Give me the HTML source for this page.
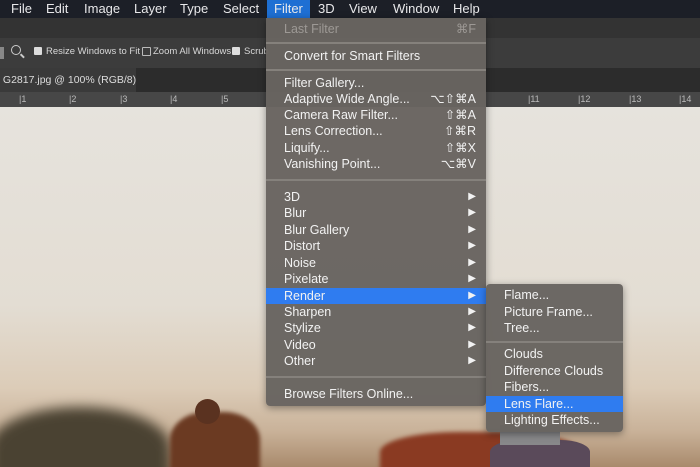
<!DOCTYPE html><html><head><style>
body{margin:0;width:700px;height:467px;overflow:hidden;position:relative;font-family:"Liberation Sans",sans-serif;background:#e2ded6}
.abs{position:absolute}
#mb{left:0;top:0;width:700px;height:18px;background:#1c1f27;color:#e8e8ea;font-size:13px}
#mb span{position:absolute;top:1px}
#photo{left:0;top:107px;width:700px;height:360px;overflow:hidden;background:linear-gradient(#e6e3dd 0%,#e3ddd3 55%,#dcccb8 78%,#c9b299 90%,#a98a6c 100%)}
.menu{background:rgba(104,100,96,.97);border-radius:4px;box-shadow:0 2px 8px rgba(0,0,0,.4);color:#f2f2f2;font-size:12.5px}
.it{position:absolute;left:0;right:0;height:16px;line-height:16px;padding-left:18px}
.sc{position:absolute;right:10px;top:0}
.ar{position:absolute;right:10px;top:0;font-size:10px}
.sep{position:absolute;left:0;right:0;height:2px;background:#85817c}
.hl{background:#2f7cf0}
</style></head><body>
<div class="abs" style="left:0;top:18px;width:700px;height:20px;background:#333"></div>
<div class="abs" style="left:0;top:38px;width:700px;height:30px;background:#3c3c3c;color:#d8d8d8;font-size:9.5px;white-space:nowrap">
<div class="abs" style="left:0;top:9px;width:4px;height:12px;background:#888"></div>
<div class="abs" style="left:11px;top:7px;width:8px;height:8px;border:1.5px solid #ccc;border-radius:50%"></div>
<div class="abs" style="left:20px;top:17px;width:5px;height:1.5px;background:#ccc;transform:rotate(45deg)"></div>
<div class="abs" style="left:34px;top:9px;width:8px;height:8px;background:#ddd;border-radius:1px"></div>
<span class="abs" style="left:46px;top:8px">Resize Windows to Fit</span>
<div class="abs" style="left:142px;top:9px;width:7px;height:7px;border:1px solid #bbb;border-radius:1px"></div>
<span class="abs" style="left:153px;top:8px">Zoom All Windows</span>
<div class="abs" style="left:232px;top:9px;width:8px;height:8px;background:#ddd;border-radius:1px"></div>
<span class="abs" style="left:244px;top:8px">Scrub</span>
</div>
<div class="abs" style="left:0;top:68px;width:700px;height:24px;background:#2c2c2c"></div>
<div class="abs" style="left:0;top:68px;width:136px;height:24px;background:#3a3a3a;color:#ddd;font-size:10.5px;line-height:24px;white-space:nowrap;overflow:hidden">&nbsp;G2817.jpg @ 100% (RGB/8)</div>
<div class="abs" style="left:0;top:92px;width:700px;height:15px;background:#474747;color:#bbb;font-size:9px;border-bottom:1px solid #222">
<span class="abs" style="left:19px;top:2px">|1</span><span class="abs" style="left:69px;top:2px">|2</span><span class="abs" style="left:120px;top:2px">|3</span><span class="abs" style="left:170px;top:2px">|4</span><span class="abs" style="left:221px;top:2px">|5</span>
<span class="abs" style="left:528px;top:2px">|11</span><span class="abs" style="left:578px;top:2px">|12</span><span class="abs" style="left:629px;top:2px">|13</span><span class="abs" style="left:679px;top:2px">|14</span></div>
<div id="photo" class="abs">
<div class="abs" style="left:-10px;top:300px;width:180px;height:80px;background:#4a4232;border-radius:50% 50% 0 0;filter:blur(6px)"></div>
<div class="abs" style="left:170px;top:305px;width:90px;height:70px;background:#6b3a22;border-radius:40% 40% 0 0;filter:blur(2px)"></div>
<div class="abs" style="left:195px;top:292px;width:25px;height:25px;background:#5a3220;border-radius:50%"></div>
<div class="abs" style="left:380px;top:325px;width:200px;height:50px;background:#8a3a22;border-radius:40% 40% 0 0;filter:blur(2px)"></div>
<div class="abs" style="left:490px;top:333px;width:100px;height:40px;background:#5a4a5a;border-radius:30% 30% 0 0"></div>
<div class="abs" style="left:500px;top:318px;width:60px;height:20px;background:#88888a"></div>
</div>
<div id="mb" class="abs">
<span style="left:11px">File</span><span style="left:46px">Edit</span><span style="left:84px">Image</span><span style="left:134px">Layer</span><span style="left:180px">Type</span><span style="left:223px">Select</span>
<div class="abs" style="left:267px;top:0;width:43px;height:18px;background:#1e6fd3"></div>
<span style="left:274px">Filter</span><span style="left:318px">3D</span><span style="left:349px">View</span><span style="left:393px">Window</span><span style="left:453px">Help</span></div>
<div class="abs menu" style="left:266px;top:18px;width:220px;height:388px;border-radius:0 0 4px 4px">
<div class="it" style="top:3px;color:#9d9995">Last Filter<span class="sc">⌘F</span></div>
<div class="sep" style="top:24px"></div>
<div class="it" style="top:30px">Convert for Smart Filters</div>
<div class="sep" style="top:51px"></div>
<div class="it" style="top:57px">Filter Gallery...</div>
<div class="it" style="top:73px">Adaptive Wide Angle...<span class="sc">⌥⇧⌘A</span></div>
<div class="it" style="top:89px">Camera Raw Filter...<span class="sc">⇧⌘A</span></div>
<div class="it" style="top:105px">Lens Correction...<span class="sc">⇧⌘R</span></div>
<div class="it" style="top:122px">Liquify...<span class="sc">⇧⌘X</span></div>
<div class="it" style="top:138px">Vanishing Point...<span class="sc">⌥⌘V</span></div>
<div class="sep" style="top:161px"></div>
<div class="it" style="top:171px">3D<span class="ar">▶</span></div>
<div class="it" style="top:187px">Blur<span class="ar">▶</span></div>
<div class="it" style="top:204px">Blur Gallery<span class="ar">▶</span></div>
<div class="it" style="top:220px">Distort<span class="ar">▶</span></div>
<div class="it" style="top:237px">Noise<span class="ar">▶</span></div>
<div class="it" style="top:253px">Pixelate<span class="ar">▶</span></div>
<div class="it hl" style="top:270px">Render<span class="ar">▶</span></div>
<div class="it" style="top:286px">Sharpen<span class="ar">▶</span></div>
<div class="it" style="top:302px">Stylize<span class="ar">▶</span></div>
<div class="it" style="top:319px">Video<span class="ar">▶</span></div>
<div class="it" style="top:335px">Other<span class="ar">▶</span></div>
<div class="sep" style="top:358px"></div>
<div class="it" style="top:368px">Browse Filters Online...</div>
</div>
<div class="abs menu" style="left:486px;top:284px;width:137px;height:148px">
<div class="it" style="top:3px">Flame...</div>
<div class="it" style="top:20px">Picture Frame...</div>
<div class="it" style="top:36px">Tree...</div>
<div class="sep" style="top:57px"></div>
<div class="it" style="top:62px">Clouds</div>
<div class="it" style="top:79px">Difference Clouds</div>
<div class="it" style="top:95px">Fibers...</div>
<div class="it hl" style="top:112px">Lens Flare...</div>
<div class="it" style="top:128px">Lighting Effects...</div>
</div>
</body></html>
